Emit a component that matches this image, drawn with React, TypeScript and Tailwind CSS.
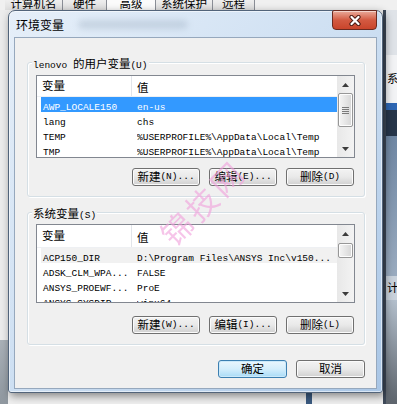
import React from "react";

const CJK_RE = /[\u2e80-\u9fff\uff00-\uffef]/;

// split a label into CJK / latin runs so each gets its own font
function splitRuns(s: string) {
  const out: { t: string; cjk: boolean }[] = [];
  for (const ch of s) {
    const cjk = CJK_RE.test(ch);
    const last = out[out.length - 1];
    if (last && last.cjk === cjk) last.t += ch;
    else out.push({ t: ch, cjk });
  }
  return out;
}

function Label({ text }: { text: string }) {
  return (
    <>
      {splitRuns(text).map((r, i) =>
        r.cjk ? (
          <span key={i} className="font-['Noto_Sans_CJK_SC',sans-serif] text-[11.5px]">
            {r.t}
          </span>
        ) : (
          <span key={i} className="whitespace-pre font-['Liberation_Mono',monospace] text-[9.5px]">
            {r.t}
          </span>
        )
      )}
    </>
  );
}

function Btn({ label, primary = false, width = "w-[68px]" }: { label: string; primary?: boolean; width?: string }) {
  return (
    <button
      className={
        primary
          ? `flex h-[18px] ${width} items-center justify-center rounded-[3px] border border-[#3c7fb1] bg-linear-to-b from-[#eaf6fd] via-[#d4eefc] to-[#a9dbf6] leading-none text-black shadow-[inset_0_0_0_1px_#cbe9fa]`
          : `flex h-[18px] ${width} items-center justify-center rounded-[3px] border border-[#707070] bg-linear-to-b from-[#f3f3f3] via-[#e9e9e9] to-[#d0d0d0] leading-none text-black shadow-[inset_0_0_0_1px_#fbfbfb]`
      }
    >
      <Label text={label} />
    </button>
  );
}

type Row = { name: string; value: string; state?: "selected" | "focus" };

function Arrow({ down = false }: { down?: boolean }) {
  return (
    <svg width="7" height="4" viewBox="0 0 7 4">
      <path d={down ? "M0 0 L3.5 4 L7 0Z" : "M0 4 L3.5 0 L7 4Z"} fill="#3c3c3c" />
    </svg>
  );
}

function VarList({
  rows,
  listH,
  headH,
  thumb,
  grip,
}: {
  rows: Row[];
  listH: string;
  headH: string;
  thumb: string;
  grip?: boolean;
}) {
  return (
    <div className={`flex ${listH} border border-[#828790] bg-white`}>
      <div className="flex min-w-0 flex-1 flex-col overflow-hidden">
        <div className={`flex ${headH} shrink-0 items-center border-b border-[#eef0f3]`}>
          <div className="flex h-full w-[95px] shrink-0 items-center border-r border-[#e2e5ea] pl-[5px] leading-none">
            <Label text="变量" />
          </div>
          <div className="pl-[5px] leading-none">
            <Label text="值" />
          </div>
        </div>
        <div className="pl-[4px]">
          {rows.map((r) => (
            <div
              key={r.name}
              className={`flex h-[15px] items-center leading-none ${
                r.state === "selected" ? "bg-[#3399ff] text-white" : r.state === "focus" ? "bg-[#f1f1f1] text-black" : "text-black"
              }`}
            >
              <div className="w-[96px] shrink-0 overflow-hidden whitespace-nowrap pl-[2px]">
                <Label text={r.name} />
              </div>
              <div className="min-w-0 flex-1 overflow-hidden whitespace-nowrap">
                <Label text={r.value} />
              </div>
            </div>
          ))}
        </div>
      </div>
      <div className="flex w-[17px] shrink-0 flex-col bg-linear-to-r from-[#e8e8e8] to-[#f3f3f3]">
        <div className="flex h-[17px] shrink-0 items-center justify-center">
          <Arrow />
        </div>
        <div className="flex-1">
          <div
            className={`${thumb} mx-[1px] flex flex-col items-center justify-center gap-[1px] rounded-[2px] border border-[#979797] bg-linear-to-r from-[#f5f5f5] to-[#d6d6d6] shadow-[inset_0_0_0_1px_#fdfdfd]`}
          >
            {grip && (
              <>
                <div className="h-[1px] w-[7px] bg-[#7a7a7a]" />
                <div className="h-[1px] w-[7px] bg-[#7a7a7a]" />
                <div className="h-[1px] w-[7px] bg-[#7a7a7a]" />
                <div className="h-[1px] w-[7px] bg-[#7a7a7a]" />
              </>
            )}
          </div>
        </div>
        <div className="flex h-[17px] shrink-0 items-center justify-center">
          <Arrow down />
        </div>
      </div>
    </div>
  );
}

function Group({ title, className, children }: { title: string; className: string; children: React.ReactNode }) {
  return (
    <div className={`relative rounded-[3px] border border-[#d5dfe5] shadow-[inset_1px_1px_0_#ffffff,1px_1px_0_#ffffff] ${className}`}>
      <span className="absolute left-[4px] top-[-8px] bg-[#f0f0f0] px-[1px] leading-[14px] text-black">
        <Label text={title} />
      </span>
      {children}
    </div>
  );
}

function Tab({ label, width, active = false }: { label: string; width: string; active?: boolean }) {
  return (
    <div
      className={`flex ${width} items-end justify-center overflow-hidden border-r border-[#8a8e96] ${
        active ? "bg-[#fbfbfb]" : "bg-linear-to-b from-[#eeeeee] to-[#dedede]"
      }`}
    >
      <span className="leading-[14px] text-black">
        <Label text={label} />
      </span>
    </div>
  );
}

const userRows: Row[] = [
  { name: "AWP_LOCALE150", value: "en-us", state: "selected" },
  { name: "lang", value: "chs" },
  { name: "TEMP", value: "%USERPROFILE%\\AppData\\Local\\Temp" },
  { name: "TMP", value: "%USERPROFILE%\\AppData\\Local\\Temp" },
];

const sysRows: Row[] = [
  { name: "ACP150_DIR", value: "D:\\Program Files\\ANSYS Inc\\v150...", state: "focus" },
  { name: "ADSK_CLM_WPA...", value: "FALSE" },
  { name: "ANSYS_PROEWF...", value: "ProE" },
  { name: "ANSYS_SYSDIR", value: "winx64" },
];

export default function App() {
  return (
    <div className="relative h-[404px] w-[397px] overflow-hidden bg-[#efefef]">
      {/* parent window behind the dialog */}
      <div className="flex h-[10px] bg-[#f0f0f0]">
        <div className="w-[5px]" />
        <Tab label="计算机名" width="w-[58px]" />
        <Tab label="硬件" width="w-[44px]" />
        <Tab label="高级" width="w-[49px]" active />
        <Tab label="系统保护" width="w-[57px]" />
        <Tab label="远程" width="w-[42px]" />
      </div>
      <div className="flex h-[394px]">
        <div className="flex w-[8px] flex-col">
          <div className="flex-1 bg-[#ececec]" />
          <div className="h-[64px] bg-linear-to-b from-[#aab1b8] to-[#8f979f]" />
        </div>
        <div className="flex flex-1 flex-col justify-end">
          <div className="flex h-[11px]">
            <div className="ml-[298px] w-[6px] bg-[#3a5a80]" />
          </div>
        </div>
        <div className="flex w-[14px] flex-col border-l-[3px] border-[#3f4a5a]">
          <div className="h-[45px] bg-[#dfe3e8]" />
          <div className="flex h-[48px] items-center overflow-hidden bg-[#f2f3f5] pl-[1px] text-black">
            <Label text="系" />
          </div>
          <div className="h-[7px] bg-[#2d66b3]" />
          <div className="h-[26px] bg-[#27364a]" />
          <div className="h-[140px] bg-linear-to-b from-[#6f87a3] to-[#9aabbf]" />
          <div className="flex h-[24px] items-center overflow-hidden bg-[#c9d2dc] pl-[1px] text-black">
            <Label text="计" />
          </div>
          <div className="flex-1 bg-linear-to-b from-[#b3bfcc] to-[#5d646c]" />
        </div>
      </div>

      {/* 环境变量 dialog */}
      <div className="absolute left-[8px] top-[10px] flex h-[383px] w-[375px] flex-col rounded-t-[7px] rounded-b-[3px] border border-[#52647a] bg-linear-to-br from-[#e6eff9] via-[#cddff2] to-[#a9c6e6] px-[5px] pb-[3px] shadow-[2px_3px_8px_rgba(0,0,0,0.45),inset_0_0_0_1px_rgba(255,255,255,0.55)]">
        <div className="flex h-[26px] shrink-0 items-center pl-[2px] pt-[1px]">
          <span className="font-['Noto_Sans_CJK_SC',sans-serif] text-[12px] leading-none text-black">环境变量</span>
          <div className="ml-[14px] h-[9px] w-[110px] rounded-full bg-[#9fb0c2] opacity-40 blur-[3px]" />
        </div>
        <div className="absolute right-[5px] top-[-1px] flex h-[20px] w-[45px] items-center justify-center rounded-b-[4px] rounded-tl-[2px] border border-[#6b2a20] bg-linear-to-b from-[#e8aa9b] via-[#d35a42] to-[#c9442b] shadow-[inset_0_1px_0_rgba(255,255,255,0.5)]">
          <svg width="14" height="11" viewBox="0 0 14 11">
            <path d="M3.5 2 L10.5 9 M10.5 2 L3.5 9" stroke="#4a1a12" strokeWidth="4.2" strokeLinecap="round" />
            <path d="M3.5 2 L10.5 9 M10.5 2 L3.5 9" stroke="#ffffff" strokeWidth="2.3" strokeLinecap="round" />
          </svg>
        </div>

        <div className="flex flex-1 flex-col border border-[#96a8bd] bg-[#f0f0f0] pb-[10px] pl-[12px] pr-[11px] pt-[24px]">
          <Group title="lenovo 的用户变量(U)" className="pb-[10px] pl-[8px] pr-[9px] pt-[12px]">
            <VarList rows={userRows} listH="h-[83px]" headH="h-[21px]" thumb="mt-0 h-[34px]" grip />
            <div className="mt-[10px] flex justify-end gap-[9px] pr-[1px]">
              <Btn label="新建(N)..." />
              <Btn label="编辑(E)..." />
              <Btn label="删除(D)" />
            </div>
          </Group>

          <Group title="系统变量(S)" className="mt-[15px] pb-[10px] pl-[8px] pr-[9px] pt-[11px]">
            <VarList rows={sysRows} listH="h-[79px]" headH="h-[23px]" thumb="mt-[1px] h-[15px]" />
            <div className="mt-[13px] flex justify-end gap-[9px] pr-[1px]">
              <Btn label="新建(W)..." />
              <Btn label="编辑(I)..." />
              <Btn label="删除(L)" />
            </div>
          </Group>

          <div className="mt-[15px] flex justify-end gap-[9px]">
            <Btn label="确定" primary width="w-[69px]" />
            <Btn label="取消" width="w-[69px]" />
          </div>
        </div>
      </div>

      {/* site watermark */}
      <div className="pointer-events-none absolute left-[146px] top-[186px] w-[112px] -rotate-45 text-center font-['Noto_Sans_CJK_SC',sans-serif] text-[31px] leading-none tracking-[4px] text-[#f19fdc] opacity-60">
        锦技网
      </div>
    </div>
  );
}
